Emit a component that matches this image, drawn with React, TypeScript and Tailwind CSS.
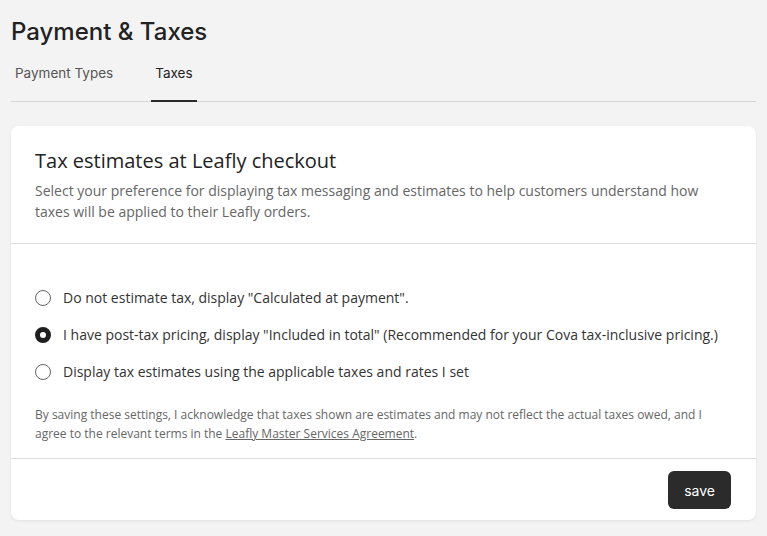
import { useState } from 'react'

const options = [
  { id: 'none', label: 'Do not estimate tax, display "Calculated at payment".' },
  {
    id: 'included',
    label: 'I have post-tax pricing, display "Included in total" (Recommended for your Cova tax-inclusive pricing.)',
  },
  { id: 'estimate', label: 'Display tax estimates using the applicable taxes and rates I set' },
]

export default function App() {
  const [tab, setTab] = useState('taxes')
  const [choice, setChoice] = useState('included')

  return (
    <div className="min-h-screen bg-[#f3f3f3] px-[11px] pt-[16px] pb-4 font-['Inter',sans-serif] text-[#222]">
      <h1 className="text-[24px] leading-[32px] font-medium text-[#222]">Payment &amp; Taxes</h1>

      {/* Tabs */}
      <div className="mt-[5px] flex gap-[34px] border-b border-[#d6d6d6]">
        <button
          onClick={() => setTab('types')}
          className={`-mb-px px-[4px] pt-[10px] pb-[17px] text-[13.5px] leading-[20px] border-b-2 ${
            tab === 'types' ? 'border-[#2b2b2b] text-[#222]' : 'border-transparent text-[#555]'
          }`}
        >
          Payment Types
        </button>
        <button
          onClick={() => setTab('taxes')}
          className={`-mb-px px-[4px] pt-[10px] pb-[17px] text-[13.5px] leading-[20px] border-b-2 ${
            tab === 'taxes' ? 'border-[#2b2b2b] text-[#222]' : 'border-transparent text-[#555]'
          }`}
        >
          Taxes
        </button>
      </div>

      {/* Card */}
      <div className="mt-[24px] rounded-[8px] bg-white shadow-[0_1px_3px_rgba(0,0,0,0.08)] font-['Open_Sans',sans-serif]">
        <div className="px-[24px] pt-[21px] pb-[21px] border-b border-[#dcdcdc]">
          <h2 className="text-[20px] leading-[28px] text-[#222]">Tax estimates at Leafly checkout</h2>
          <p className="mt-[5px] text-[14px] leading-[21px] text-[#666]">
            Select your preference for displaying tax messaging and estimates to help customers understand how
            taxes will be applied to their Leafly orders.
          </p>
        </div>

        <div className="px-[24px] pt-[43px] pb-[15px] border-b border-[#dcdcdc]">
          <div className="flex flex-col gap-[16px]">
            {options.map((o) => (
              <label key={o.id} className="flex items-center gap-[12px] cursor-pointer">
                <input
                  type="radio"
                  name="tax"
                  checked={choice === o.id}
                  onChange={() => setChoice(o.id)}
                  className="sr-only"
                />
                <span
                  className={`h-[16px] w-[16px] shrink-0 rounded-full bg-white ${
                    choice === o.id ? 'border-[5px] border-[#1f1f1f]' : 'border border-[#666]'
                  }`}
                />
                <span className="text-[14px] leading-[21px] text-[#333]">{o.label}</span>
              </label>
            ))}
          </div>

          <p className="mt-[23px] text-[12px] leading-[19px] text-[#666]">
            By saving these settings, I acknowledge that taxes shown are estimates and may not reflect the actual taxes
            owed, and I agree to the relevant terms in the{' '}
            <a href="#" className="underline">
              Leafly Master Services Agreement
            </a>
            .
          </p>
        </div>

        <div className="flex justify-end px-[25px] pt-[12px] pb-[11px]">
          <button className="h-[38px] rounded-[6px] bg-[#2b2b2b] px-[16px] text-[14px] text-white font-['Inter',sans-serif]">
            save
          </button>
        </div>
      </div>
    </div>
  )
}
